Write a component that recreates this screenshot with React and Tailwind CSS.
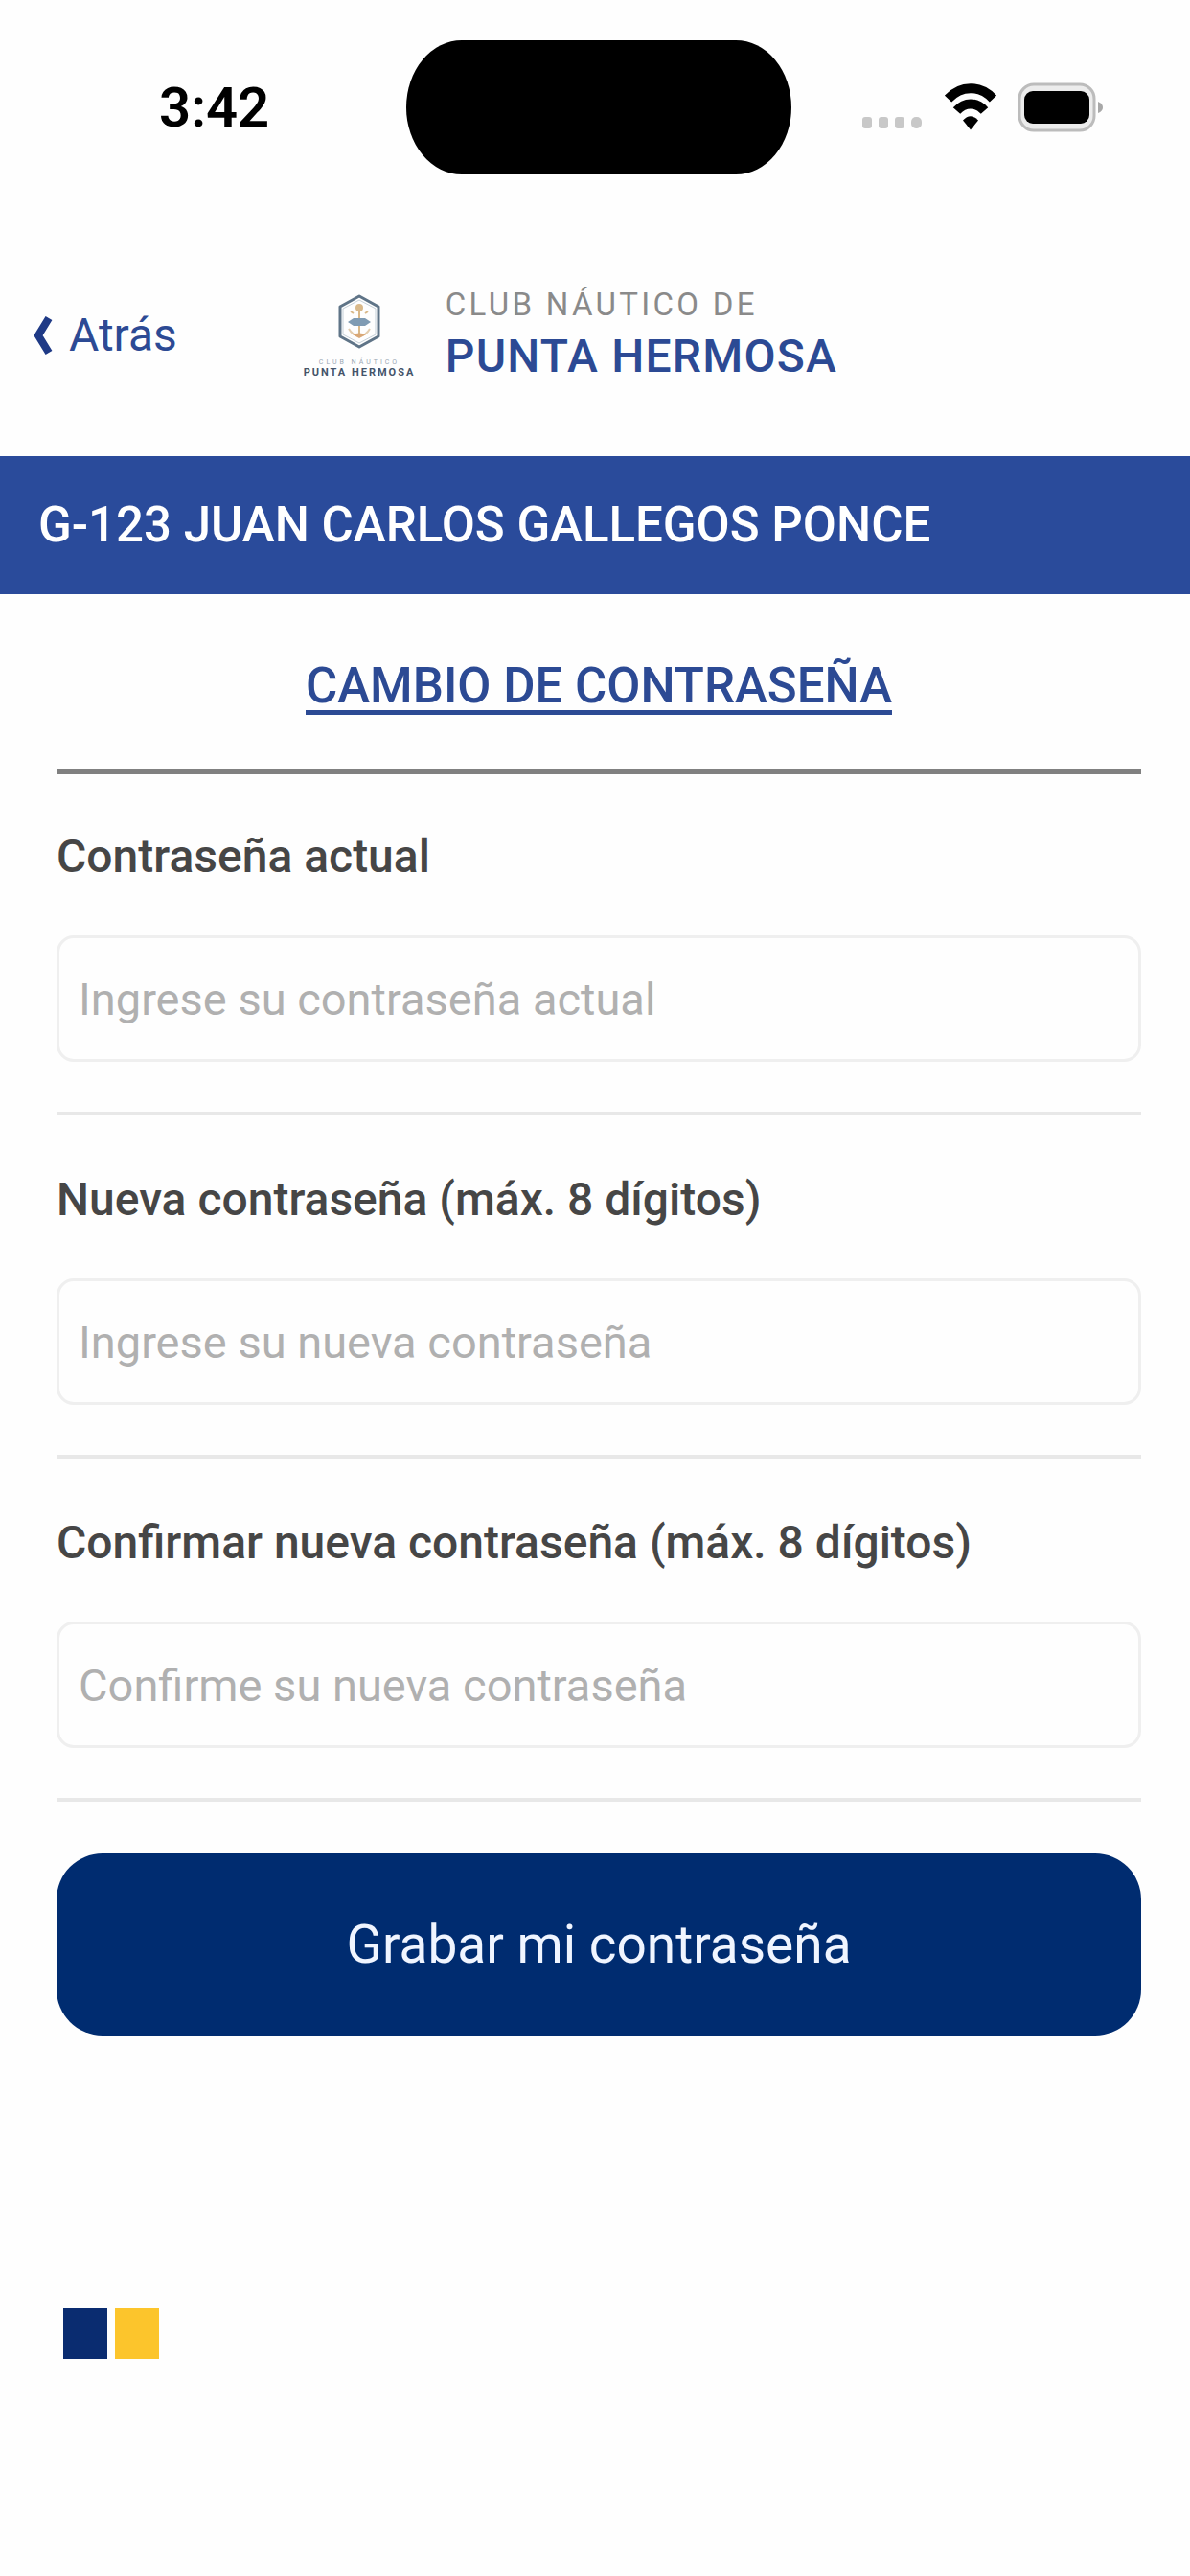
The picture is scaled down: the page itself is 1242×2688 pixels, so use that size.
import React, { useState } from 'react';

const fields = [
  {
    id: 'currentPassword',
    label: 'Contraseña actual',
    placeholder: 'Ingrese su contraseña actual',
  },
  {
    id: 'newPassword',
    label: 'Nueva contraseña (máx. 8 dígitos)',
    placeholder: 'Ingrese su nueva contraseña',
    maxLength: 8,
  },
  {
    id: 'confirmPassword',
    label: 'Confirmar nueva contraseña (máx. 8 dígitos)',
    placeholder: 'Confirme su nueva contraseña',
    maxLength: 8,
  },
];

const StatusBar = () => (
  <div className="grid grid-cols-[1fr_auto_1fr] items-center pt-[42px] pr-[88px] pl-24">
    <p className="pl-[70px] text-[58px] leading-[72px] font-semibold text-black">3:42</p>
    <div className="h-[140px] w-[402px] rounded-[58px/70px] bg-black"></div>
    <div className="flex items-center justify-end">
      {/* signal */}
      <svg className="h-[52px] w-[64px]" viewBox="0 0 64 52" fill="#c8c8c8">
        <rect x="0" y="36" width="10" height="12" rx="3" />
        <rect x="17" y="36" width="10" height="12" rx="3" />
        <rect x="34" y="36" width="10" height="12" rx="3" />
        <rect x="51" y="36" width="11" height="12" rx="5" />
      </svg>
      {/* wifi */}
      <svg className="ml-[22px] h-[52px] w-[54px]" viewBox="0 0 54 52" fill="none" stroke="#000">
        <path d="M3.500 17C17 2.500 37 2.500 50.500 17" strokeWidth="10" />
        <path d="M12.500 29.500C21 20 33 20 41.500 29.500" strokeWidth="10" />
        <path d="M19 39.500Q27 31 35 39.500L27 49.500Z" fill="#000" stroke="none" />
      </svg>
      {/* battery */}
      <svg className="ml-[22px] h-[52px] w-[92px]" viewBox="0 0 92 52">
        <rect x="2" y="2" width="78" height="48" rx="15" fill="#ececec" stroke="#bcbcbc" strokeWidth="3" />
        <rect x="7" y="9" width="68" height="34" rx="9" fill="#000" />
        <path d="M84 20Q89 22 89 26Q89 30 84 32Z" fill="#a8a8a8" />
      </svg>
    </div>
  </div>
);

const ClubLogo = () => (
  <svg className="h-[90px] w-[120px]" viewBox="0 0 120 90" fill="none">
    <path d="M60 4L80 15V46L60 57L40 46V15Z" stroke="#5f7487" strokeWidth="3" strokeLinejoin="round" />
    <path d="M60 8L77 17V44L60 53L43 44V17Z" stroke="#c5d0d8" strokeWidth="1" />
    <circle cx="60" cy="16" r="4" fill="#d9b98a" />
    <path d="M60 18V46M51 20L54 22M69 20L66 22" stroke="#d9b98a" strokeWidth="2" />
    <path d="M48 31L54 27H66L72 31L66 35H54Z" fill="#7f9bb3" />
    <path d="M49 38Q53 45 60 46Q67 45 71 38" stroke="#e3cdae" strokeWidth="2" />
    <path d="M53 44Q60 41 67 44L60 48Z" fill="#d9a877" />
    <text x="60" y="75" textAnchor="middle" fontSize="7" letterSpacing="3" fill="#9aa7b4">
      CLUB NÁUTICO
    </text>
    <text x="60" y="87" textAnchor="middle" fontSize="11" fontWeight="700" letterSpacing="2" fill="#44546a">
      PUNTA HERMOSA
    </text>
  </svg>
);

const App = () => {
  const [values, setValues] = useState({
    currentPassword: '',
    newPassword: '',
    confirmPassword: '',
  });

  const onChangeHandler = (e) => {
    setValues({ ...values, [e.target.id]: e.target.value });
  };

  return (
    <div className="min-h-screen bg-[#fefefe] font-['Roboto','Liberation_Sans',sans-serif]">
      <StatusBar />

      {/* header */}
      <header className="flex h-[294px] items-center px-8 pt-[42px]">
        <a href="#atras" className="flex items-center gap-4 text-[48px] leading-[60px] text-[#2c4a94]">
          <svg className="h-[42px] w-6" viewBox="0 0 24 42" fill="none">
            <path d="M19 3L8 21L19 39" stroke="#1f3a86" strokeWidth="8" />
          </svg>
          Atrás
        </a>
        <div className="ml-[130px] flex items-center gap-[30px]">
          <ClubLogo />
          <div>
            <p className="text-[33px] leading-[44px] tracking-widest text-[#8a8a8a]">CLUB NÁUTICO DE</p>
            <p className="text-[48px] leading-[64px] font-medium tracking-wide text-[#2c4a94]">PUNTA HERMOSA</p>
          </div>
        </div>
      </header>

      {/* member */}
      <div className="flex h-36 items-center bg-[#2a4b9b] px-10">
        <p className="text-[51px] leading-[64px] font-medium text-white">
          G-123 JUAN CARLOS GALLEGOS PONCE
        </p>
      </div>

      <main className="pr-[51px] pl-[59px]">
        <h1 className="border-b-[6px] border-[#808080] pt-16 pb-[54px] text-center text-[51px] leading-[64px] font-medium text-[#2c4a94] underline decoration-[5px] underline-offset-[8px]">
          CAMBIO DE CONTRASEÑA
        </h1>

        <form onSubmit={(e) => e.preventDefault()} className="flex flex-col gap-0.5">
          {fields.map((field) => (
            <div key={field.id} className="border-b-4 border-[#e8e8e8] pt-14 pb-[52px]">
              <label htmlFor={field.id} className="block text-[48px] leading-[60px] font-medium text-[#464646]">
                {field.label}
              </label>
              <input
                type="password"
                id={field.id}
                value={values[field.id]}
                onChange={onChangeHandler}
                maxLength={field.maxLength}
                placeholder={field.placeholder}
                className="mt-[52px] block h-[132px] w-full rounded-[18px] border-[3px] border-[#efefef] bg-[#fefefe] px-5 text-[47px] text-[#464646] outline-none placeholder:text-[#b0b0b0]"
              />
            </div>
          ))}

          <button
            type="submit"
            className="mt-[52px] h-[190px] w-full cursor-pointer rounded-[48px] bg-[#002c70] text-[55px] text-[#f0f5ff]"
          >
            Grabar mi contraseña
          </button>
        </form>
      </main>

      <footer className="flex gap-2 px-[66px] pt-[284px]">
        <div className="h-[54px] w-[46px] bg-[#0a2c70]"></div>
        <div className="h-[54px] w-[46px] bg-[#fcc52c]"></div>
      </footer>
    </div>
  );
};

export default App;
